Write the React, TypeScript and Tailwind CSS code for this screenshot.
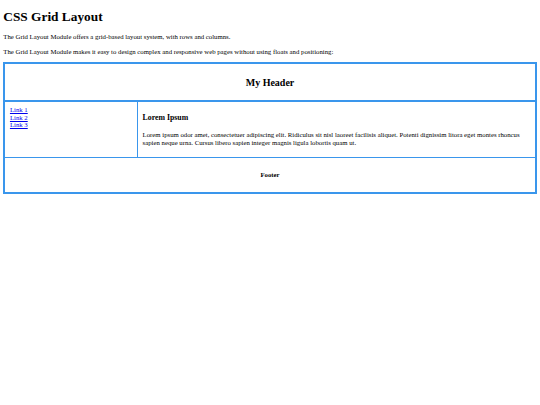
import React from "react";

export default function App() {
  return (
    <div className="min-h-[405px] bg-white px-[3.33px] py-[0.1px] text-black [font-family:'Liberation_Serif','Times_New_Roman',serif]">
      <h1 className="my-[8.93px] text-[13.33px] font-bold leading-[1.15]">CSS Grid Layout</h1>
      <p className="my-[6.67px] text-[6.75px] leading-[1.14]">
        The Grid Layout Module offers a grid-based layout system, with rows and columns.
      </p>
      <p className="my-[6.67px] text-[6.75px] leading-[1.14]">
        The Grid Layout Module makes it easy to design complex and responsive web pages without using floats and positioning:
      </p>
      <div className="grid grid-cols-4 gap-[1.3px] border-[2.5px] border-[#3a96ec] bg-[#3a96ec]">
        <div className="col-span-4 bg-white px-[4.17px] pt-[4.6px] pb-[3.8px] text-center">
          <h2 className="my-[8.3px] text-[10px] font-bold leading-[1.15]">My Header</h2>
        </div>
        <div className="col-span-1 bg-white px-[4.6px] py-[4.2px] text-[6.75px] leading-[1.14]">
          <a href="#" className="text-[#0000ee] underline">Link 1</a>
          <br />
          <a href="#" className="text-[#0000ee] underline">Link 2</a>
          <br />
          <a href="#" className="text-[#0000ee] underline">Link 3</a>
        </div>
        <div className="col-span-3 bg-white px-[4.6px] pt-[4.8px] pb-[3.6px]">
          <h3 className="my-[7.8px] text-[7.8px] font-bold leading-[1.15]">Lorem Ipsum</h3>
          <p className="my-[6.67px] text-[6.75px] leading-[1.14]">
            Lorem ipsum odor amet, consectetuer adipiscing elit. Ridiculus sit nisl laoreet facilisis aliquet. Potenti dignissim litora eget montes rhoncus sapien neque urna. Cursus libero sapien integer magnis ligula lobortis quam ut.
          </p>
        </div>
        <div className="col-span-4 bg-white px-[4.6px] py-[4.17px] text-center">
          <h4 className="my-[8.87px] text-[6.75px] font-bold leading-[1.15]">Footer</h4>
        </div>
      </div>
    </div>
  );
}
